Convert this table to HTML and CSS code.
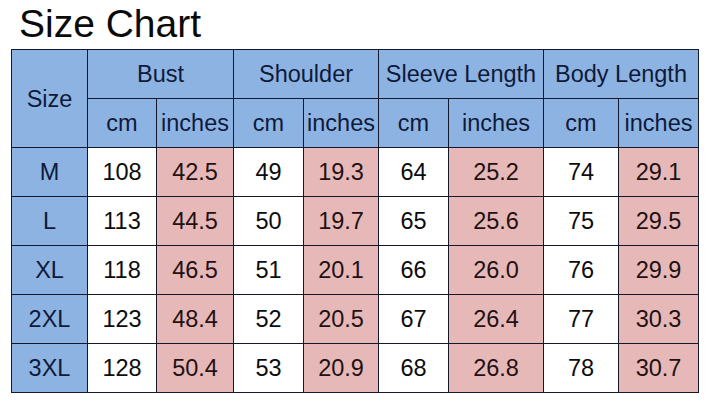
FILE: index.html
```html
<!DOCTYPE html>
<html lang="en">
<head>
<meta charset="utf-8">
<title>Size Chart</title>
<link rel="stylesheet" href="styles.css">
</head>
<body>
<h1 class="title">Size Chart</h1>
<div class="chart">
  <div class="cell head size-head">Size</div>
  <div class="cell head span2">Bust</div>
  <div class="cell head span2">Shoulder</div>
  <div class="cell head span2">Sleeve Length</div>
  <div class="cell head span2">Body Length</div>
  <div class="cell head">cm</div><div class="cell head">inches</div>
  <div class="cell head">cm</div><div class="cell head">inches</div>
  <div class="cell head">cm</div><div class="cell head">inches</div>
  <div class="cell head">cm</div><div class="cell head">inches</div>

  <div class="cell size">M</div>
  <div class="cell cm">108</div><div class="cell in">42.5</div>
  <div class="cell cm">49</div><div class="cell in">19.3</div>
  <div class="cell cm">64</div><div class="cell in">25.2</div>
  <div class="cell cm">74</div><div class="cell in">29.1</div>

  <div class="cell size">L</div>
  <div class="cell cm">113</div><div class="cell in">44.5</div>
  <div class="cell cm">50</div><div class="cell in">19.7</div>
  <div class="cell cm">65</div><div class="cell in">25.6</div>
  <div class="cell cm">75</div><div class="cell in">29.5</div>

  <div class="cell size">XL</div>
  <div class="cell cm">118</div><div class="cell in">46.5</div>
  <div class="cell cm">51</div><div class="cell in">20.1</div>
  <div class="cell cm">66</div><div class="cell in">26.0</div>
  <div class="cell cm">76</div><div class="cell in">29.9</div>

  <div class="cell size">2XL</div>
  <div class="cell cm">123</div><div class="cell in">48.4</div>
  <div class="cell cm">52</div><div class="cell in">20.5</div>
  <div class="cell cm">67</div><div class="cell in">26.4</div>
  <div class="cell cm">77</div><div class="cell in">30.3</div>

  <div class="cell size">3XL</div>
  <div class="cell cm">128</div><div class="cell in">50.4</div>
  <div class="cell cm">53</div><div class="cell in">20.9</div>
  <div class="cell cm">68</div><div class="cell in">26.8</div>
  <div class="cell cm">78</div><div class="cell in">30.7</div>
</div>
</body>
</html>
```
FILE: styles.css
```css
html, body {
  margin: 0;
  padding: 0;
  background: #ffffff;
}
body {
  font-family: "Liberation Sans", Arial, sans-serif;
  width: 712px;
  height: 403px;
  overflow: hidden;
}
.title {
  margin: 1px 0 2px 19px;
  font-size: 39px;
  line-height: 46px;
  font-weight: normal;
  color: #0a0a0a;
}
.chart {
  margin-left: 11px;
  width: 686px;
  display: grid;
  grid-template-columns: 75px 68px 76px 69px 74px 69px 94px 74px 79px;
  grid-auto-rows: 48px;
  gap: 1px;
  border: 1px solid #14182a;
  background: #14182a;
}
.cell {
  display: flex;
  align-items: center;
  justify-content: center;
  font-size: 23.5px;
  line-height: 1;
  padding-top: 2px;
  box-sizing: border-box;
  white-space: nowrap;
}
.head {
  background: #8db3e2;
  color: #0f1a3a;
}
.size-head {
  grid-row: span 2;
}
.span2 {
  grid-column: span 2;
}
.size {
  background: #8db3e2;
  color: #0f1a3a;
}
.cm {
  background: #ffffff;
  color: #0c0c0c;
}
.in {
  background: #e6b9b8;
  color: #231012;
}
```
